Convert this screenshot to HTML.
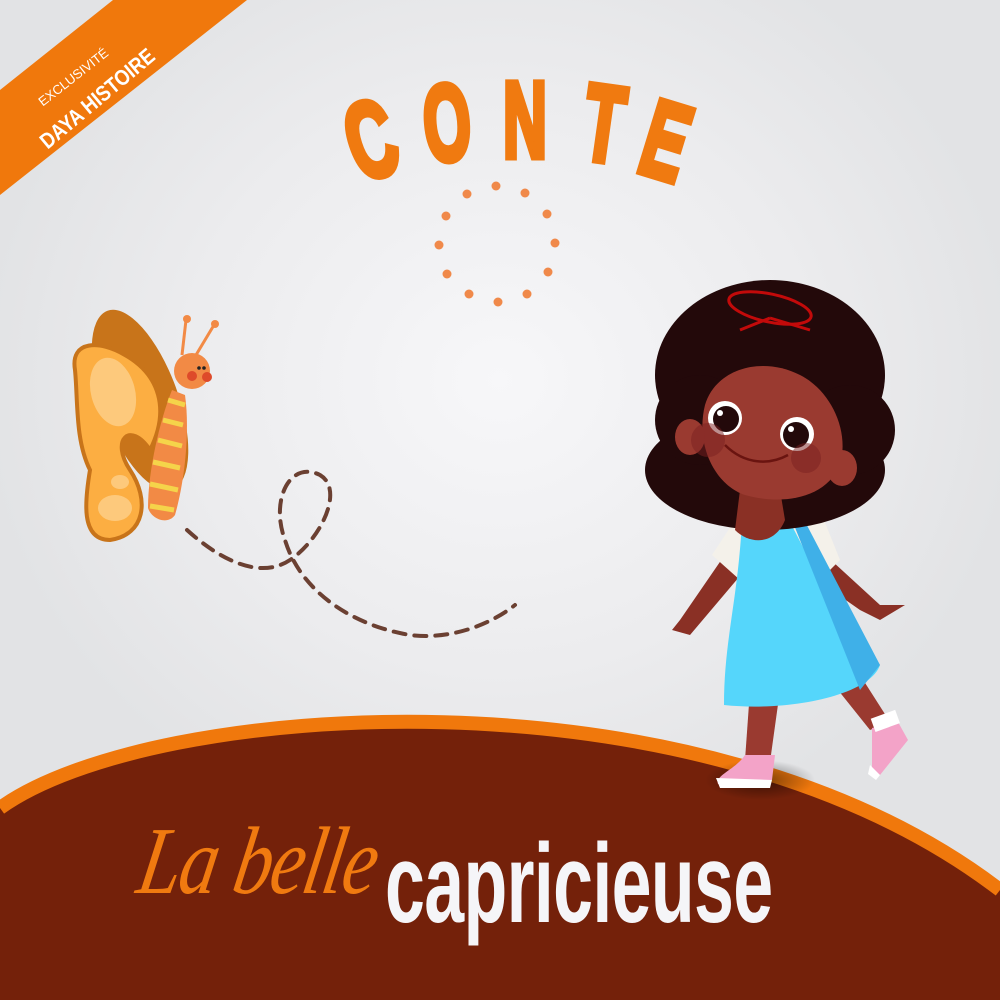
<!DOCTYPE html>
<html><head><meta charset="utf-8"><style>
*{margin:0;padding:0}
html,body{width:1000px;height:1000px;overflow:hidden}
body{position:relative;background:radial-gradient(ellipse 520px 480px at 500px 380px,#f7f7f9 0%,#ececee 60%,#e2e3e5 100%);font-family:"Liberation Sans",sans-serif}
.l{position:absolute;width:0;height:0}
.l span{position:absolute;left:0;top:0;font-weight:bold;color:#f07a10;font-size:108px;line-height:1;white-space:nowrap;-webkit-text-stroke:7px #f07a10}
</style></head><body>
<svg width="1000" height="1000" style="position:absolute;left:0;top:0">
<defs><radialGradient id="sh" cx="0.5" cy="0.5" r="0.5"><stop offset="0" stop-color="#000" stop-opacity=".5"/><stop offset="1" stop-color="#000" stop-opacity="0"/></radialGradient></defs>
<polygon points="113,0 247,0 0,195 0,90" fill="#f0780c"/>
<g fill="#f0894a">
<circle cx="496" cy="186" r="4.5"/><circle cx="525" cy="193" r="4.5"/><circle cx="547" cy="214" r="4.5"/><circle cx="555" cy="243" r="4.5"/><circle cx="548" cy="272" r="4.5"/><circle cx="527" cy="294" r="4.5"/><circle cx="498" cy="302" r="4.5"/><circle cx="469" cy="294" r="4.5"/><circle cx="447" cy="274" r="4.5"/><circle cx="439" cy="245" r="4.5"/><circle cx="446" cy="216" r="4.5"/><circle cx="467" cy="194" r="4.5"/>
</g>
<path d="M187,530 C220,560 260,580 290,560 C320,540 345,490 320,475 C290,460 270,500 285,540 C300,590 350,625 410,635 C450,640 490,625 515,605" fill="none" stroke="#6b4032" stroke-width="4" stroke-dasharray="12,9" stroke-linecap="round"/>
<ellipse cx="140" cy="400" rx="38" ry="95" fill="#c8741a" transform="rotate(-20 140 400)"/>
<path d="M75,370 C70,340 100,340 125,355 C160,375 170,410 150,450 C130,420 110,440 130,470 C150,500 145,535 110,540 C80,540 85,500 90,470 C75,440 78,400 75,370Z" fill="#fcae42" stroke="#c8741a" stroke-width="4"/>
<ellipse cx="113" cy="392" rx="22" ry="35" fill="#fdc97c" transform="rotate(-15 113 392)"/>
<ellipse cx="115" cy="508" rx="17" ry="13" fill="#fdc97c"/><ellipse cx="120" cy="482" rx="9" ry="7" fill="#fdc97c"/>
<path d="M172,390 L185,395 C190,430 185,480 175,515 C168,525 152,520 148,508 C148,470 160,420 172,390Z" fill="#f28a45"/>
<g stroke="#f5d44a" stroke-width="5"><line x1="168" y1="400" x2="185" y2="405"/><line x1="163" y1="420" x2="183" y2="425"/><line x1="158" y1="440" x2="182" y2="446"/><line x1="153" y1="462" x2="180" y2="468"/><line x1="150" y1="484" x2="178" y2="490"/><line x1="150" y1="506" x2="174" y2="510"/></g>
<line x1="182" y1="355" x2="186" y2="320" stroke="#f28a45" stroke-width="3"/><line x1="196" y1="355" x2="214" y2="325" stroke="#f28a45" stroke-width="3"/>
<circle cx="187" cy="319" r="4" fill="#f28a45"/><circle cx="215" cy="324" r="4" fill="#f28a45"/>
<circle cx="192" cy="371" r="18" fill="#f28a45"/><circle cx="192" cy="376" r="5" fill="#de4a2a"/><circle cx="207" cy="377" r="5" fill="#de4a2a"/>
<circle cx="199" cy="368" r="1.8" fill="#222"/><circle cx="204" cy="368" r="1.8" fill="#222"/>
<path d="M0,808 C150,700 700,660 1000,890 L1000,1000 L0,1000Z" fill="#74210a"/>
<path d="M0,808 C150,700 700,660 1000,890" fill="none" stroke="#f0780c" stroke-width="14"/>
<ellipse cx="760" cy="780" rx="55" ry="20" fill="url(#sh)"/>
<path d="M750,690 L745,760 L770,762 L780,690Z" fill="#9a3a30"/>
<path d="M830,680 L870,730 L890,722 L860,675Z" fill="#9a3a30"/>
<path d="M745,755 L775,755 L772,780 L718,784 C715,775 735,770 745,755Z" fill="#f3a3c8"/><path d="M716,778 L772,780 L770,788 L720,788Z" fill="#fff"/>
<path d="M872,728 L898,722 L908,740 L880,775 L872,770Z" fill="#f3a3c8"/><path d="M870,765 L880,775 L876,780 L868,774Z" fill="#fff"/>
<rect x="872" y="714" width="26" height="14" fill="#fff" transform="rotate(-20 885 720)"/>
<path d="M735,540 L680,620 L672,630 L690,635 L745,570Z" fill="#8a3025"/>
<path d="M820,550 L880,605 L905,605 L880,620 L860,610 L810,575Z" fill="#8a3025"/>
<path d="M735,520 C755,510 800,505 822,515 L840,560 L820,580 L740,580 L712,555Z" fill="#f4f1ea"/>
<path d="M742,520 L790,522 L820,580 L880,665 C870,695 790,712 724,705 C724,640 738,600 742,520Z" fill="#55d6fb"/>
<path d="M790,515 L800,512 L880,665 L860,690Z" fill="#3fb0e8"/>
<ellipse cx="770" cy="375" rx="115" ry="95" fill="#23090a"/>
<ellipse cx="765" cy="470" rx="120" ry="60" fill="#23090a"/>
<circle cx="700" cy="420" r="45" fill="#23090a"/><circle cx="850" cy="430" r="45" fill="#23090a"/>
<path d="M740,490 L735,530 C750,545 775,545 785,520 L780,490Z" fill="#8a3025"/>
<path d="M705,405 C715,370 760,355 800,375 C830,390 850,430 840,465 C825,500 780,505 745,495 C715,485 695,445 705,405Z" fill="#9a3a30"/>
<ellipse cx="690" cy="437" rx="15" ry="18" fill="#9a3a30"/><ellipse cx="842" cy="468" rx="15" ry="18" fill="#9a3a30"/>
<circle cx="725" cy="418" r="17" fill="#fff"/><circle cx="726" cy="419" r="13" fill="#23090a"/>
<circle cx="797" cy="434" r="17" fill="#fff"/><circle cx="796" cy="435" r="13" fill="#23090a"/>
<circle cx="720" cy="413" r="3" fill="#fff"/><circle cx="791" cy="429" r="3" fill="#fff"/>
<path d="M725,445 C745,465 770,465 788,455" fill="none" stroke="#6a1410" stroke-width="2.5"/>
<circle cx="708" cy="440" r="17" fill="#7a2020" opacity=".5"/><circle cx="806" cy="458" r="15" fill="#7a2020" opacity=".5"/>
<ellipse cx="770" cy="308" rx="42" ry="14" fill="none" stroke="#c20a0a" stroke-width="3" transform="rotate(12 770 308)"/>
<path d="M770,318 L810,330 M770,318 L740,330" stroke="#c20a0a" stroke-width="3"/>
</svg>
<div style="position:absolute;left:36px;top:98px;transform:rotate(-38deg);transform-origin:0 0;color:#fff;font-size:13px;line-height:1;white-space:nowrap">EXCLUSIVITÉ</div>
<div style="position:absolute;left:36px;top:136px;transform:rotate(-40deg) scaleX(0.85);transform-origin:0 0;color:#fff;font-size:22px;font-weight:bold;line-height:1;white-space:nowrap">DAYA HISTOIRE</div>
<div class="l" style="left:371px;top:140px"><span style="transform:translate(-50%,-50%) rotate(-18deg) scaleX(0.6)">C</span></div>
<div class="l" style="left:447px;top:123px"><span style="transform:translate(-50%,-50%) rotate(-5deg) scaleX(0.56)">O</span></div>
<div class="l" style="left:525px;top:120px"><span style="transform:translate(-50%,-50%) scaleX(0.56)">N</span></div>
<div class="l" style="left:604px;top:124px"><span style="transform:translate(-50%,-50%) rotate(8deg) scaleX(0.6)">T</span></div>
<div class="l" style="left:666px;top:141px"><span style="transform:translate(-50%,-50%) rotate(17deg) scaleX(0.6)">E</span></div>
<div style="position:absolute;left:150px;top:805px;font-family:'Liberation Serif',serif;font-style:italic;font-size:96px;color:#f07a10;transform:skewX(-10deg) scaleX(0.8);transform-origin:0 0;white-space:nowrap;letter-spacing:-2px">La belle</div>
<div style="position:absolute;left:385px;top:828px;font-weight:bold;font-size:112px;line-height:1;color:#f5f5f8;transform:scaleX(0.64);transform-origin:0 0;white-space:nowrap;letter-spacing:-1px">capricieuse</div>
</body></html>
